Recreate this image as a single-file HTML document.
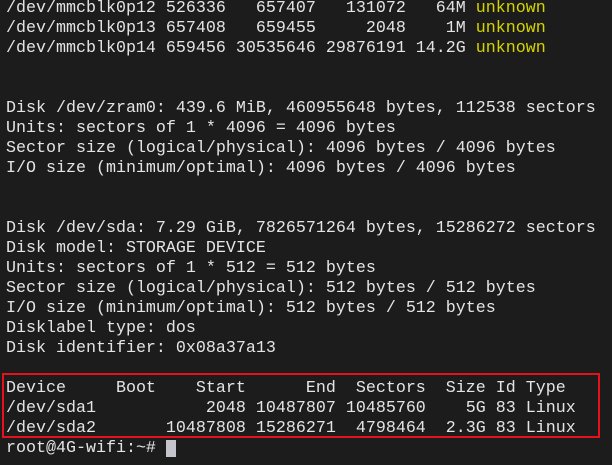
<!DOCTYPE html>
<html><head><meta charset="utf-8"><style>
html,body{margin:0;padding:0;background:#1c1c1c;width:612px;height:465px;overflow:hidden}
pre{position:absolute;left:6px;top:-1px;margin:0;font-family:"Liberation Mono",monospace;font-size:16.67px;line-height:20px;color:#e4e4e4;white-space:pre}
.y{color:#d4d400}
.box{position:absolute;left:2px;top:373px;width:594px;height:61px;border:2px solid #e5121c}
.cur{position:absolute;left:166px;top:440px;width:10px;height:17px;background:#c4c4cc}
</style></head><body>
<pre>/dev/mmcblk0p12 526336   657407   131072   64M <span class="y">unknown</span>
/dev/mmcblk0p13 657408   659455     2048    1M <span class="y">unknown</span>
/dev/mmcblk0p14 659456 30535646 29876191 14.2G <span class="y">unknown</span>


Disk /dev/zram0: 439.6 MiB, 460955648 bytes, 112538 sectors
Units: sectors of 1 * 4096 = 4096 bytes
Sector size (logical/physical): 4096 bytes / 4096 bytes
I/O size (minimum/optimal): 4096 bytes / 4096 bytes


Disk /dev/sda: 7.29 GiB, 7826571264 bytes, 15286272 sectors
Disk model: STORAGE DEVICE
Units: sectors of 1 * 512 = 512 bytes
Sector size (logical/physical): 512 bytes / 512 bytes
I/O size (minimum/optimal): 512 bytes / 512 bytes
Disklabel type: dos
Disk identifier: 0x08a37a13

Device     Boot    Start      End  Sectors  Size Id Type
/dev/sda1           2048 10487807 10485760    5G 83 Linux
/dev/sda2       10487808 15286271  4798464  2.3G 83 Linux
root@4G-wifi:~# </pre>
<div class="box"></div>
<div class="cur"></div>
</body></html>
